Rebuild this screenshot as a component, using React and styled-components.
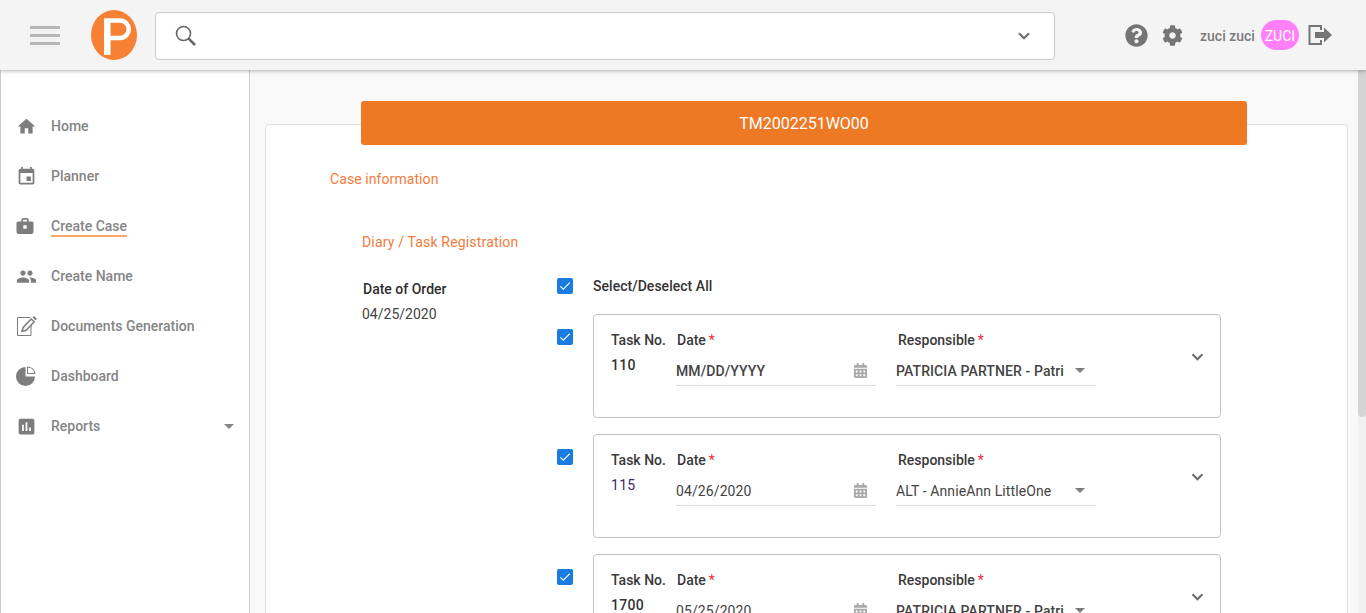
import React from "react";
import styled, { createGlobalStyle } from "styled-components";
import { MdHome, MdEvent, MdPeople, MdAssessment, MdArrowDropDown, MdCheck } from "react-icons/md";
import { FaQuestionCircle, FaCog, FaCalendarAlt } from "react-icons/fa";

const Global = createGlobalStyle`
  html, body { margin: 0; padding: 0; height: 100%; overflow: hidden; }
  body { font-family: Roboto, "Liberation Sans", sans-serif; font-size: 14px; color: #333; }
  * { box-sizing: border-box; }
`;

const Page = styled.div`
  height: 613px;
  width: 1366px;
  overflow: hidden;
  display: flex;
  flex-direction: column;
  background: #f9f9f9;
`;

const Header = styled.header`
  position: relative;
  z-index: 5;
  flex: 0 0 70px;
  display: flex;
  align-items: center;
  background: #f4f4f4;
  box-shadow: 0 1px 4px rgba(0, 0, 0, 0.3);
  padding-left: 30px;
`;

const Burger = styled.div`
  width: 30px;
  display: flex;
  flex-direction: column;
  gap: 5px;
  margin-right: 30px;
  & > span { display: block; height: 3px; background: #b6b6b6; }
`;

const LogoMark = styled.svg`
  width: 48px;
  height: 50px;
  margin-right: 17px;
  flex: none;
`;

const SearchBox = styled.div`
  width: 900px;
  height: 48px;
  margin-top: 2px;
  background: #fff;
  border: 1px solid #ccc;
  border-radius: 4px;
  display: flex;
  align-items: center;
  justify-content: space-between;
  padding: 0 24px 0 19px;
  color: #666;
`;

const HeaderTools = styled.div`
  display: flex;
  align-items: center;
  margin-left: 70px;
  color: #757575;
`;

const GearIcon = styled(FaCog)`
  margin-left: 14px;
`;

const UserName = styled.span`
  font-weight: 500;
  font-size: 14px;
  color: #7b7b7b;
  margin: 1px 6px 0 17px;
`;

const Avatar = styled.span`
  width: 38px;
  height: 30px;
  border-radius: 15px;
  background: #ff80f8;
  color: #fff;
  font-size: 14px;
  padding-top: 1px;
  display: flex;
  align-items: center;
  justify-content: center;
  margin-right: 9px;
`;

const Body = styled.div`
  flex: 1;
  min-height: 0;
  display: flex;
`;

const Sidebar = styled.nav`
  flex: 0 0 250px;
  background: #fff;
  border-left: 1px solid #ccc;
  border-right: 1px solid #ccc;
  padding: 31px 8px 0 15px;
  display: flex;
  flex-direction: column;
`;

const NavItem = styled.div`
  height: 50px;
  display: flex;
  align-items: center;
  color: #858585;
  font-weight: 500;
  font-size: 14px;
`;

const NavIcon = styled.span`
  width: 35px;
  flex: none;
  display: flex;
  align-items: center;
  color: #7d7d7d;
`;

const NavLabel = styled.span`
  flex: 1;
  display: flex;
`;

const Underlined = styled.span`
  border-bottom: ${(p) => (p.$active ? "2px solid #fba56b" : "none")};
  line-height: 18px;
  margin-top: ${(p) => (p.$active ? "2px" : "0")};
`;

const Main = styled.main`
  flex: 1;
  min-width: 0;
  position: relative;
  padding: 31px 18px 0 15px;
  overflow: hidden;
`;

const ScrollTrack = styled.div`
  position: absolute;
  top: 0;
  right: 0;
  bottom: 0;
  width: 8px;
  background: #f1f1f1;
`;

const ScrollThumb = styled.div`
  height: 347px;
  background: #d4d4d4;
  border-radius: 0 0 4px 4px;
`;

const TitleBar = styled.div`
  position: relative;
  z-index: 2;
  width: 886px;
  height: 44px;
  margin: 0 0 -21px 96px;
  background: #ed7925;
  border-radius: 3px;
  color: #fff;
  font-size: 16px;
  display: flex;
  align-items: center;
  justify-content: center;
`;

const Card = styled.section`
  width: 1083px;
  height: 600px;
  background: #fff;
  border: 1px solid #e2e2e2;
  border-radius: 4px;
  padding: 45px 0 0 64px;
`;

const SectionTitle = styled.div`
  color: #f37b3d;
  font-size: 14px;
  line-height: 18px;
  letter-spacing: 0.08px;
`;

const SubTitle = styled(SectionTitle)`
  margin: 45px 0 0 32px;
  letter-spacing: 0.17px;
`;

const FormGrid = styled.div`
  display: grid;
  grid-template-columns: 195px 36px 628px;
  margin: 27px 0 0 32px;
  row-gap: 16px;
  grid-auto-rows: min-content;
`;

const OrderBlock = styled.div`
  grid-row: 1 / span 4;
  padding-top: 2px;
  font-size: 14px;
  & > b { display: block; font-weight: 500; color: #2f2f2f; margin-left: 1px; line-height: 18px; }
  & > span { display: block; color: #444; margin-top: 7px; line-height: 18px; }
`;

const Box = styled.span`
  width: 16px;
  height: 16px;
  background: #1a7be0;
  border-radius: 2px;
  color: #fff;
  display: flex;
  align-items: center;
  justify-content: center;
  margin-top: ${(p) => p.$top || 0}px;
`;

const SelectAll = styled.div`
  font-weight: 500;
  color: #333;
  line-height: 18px;
  height: 21px;
  margin-top: -1px;
  letter-spacing: 0.03px;
`;

const TaskCard = styled.div`
  height: 104px;
  border: 1px solid #c4c4c4;
  border-radius: 4px;
  padding: 16px 0 0 17px;
  display: grid;
  grid-template-columns: 65px 220px 280px 1fr;
  position: relative;
`;

const Label = styled.div`
  font-weight: 500;
  color: #3a3a3a;
  line-height: 18px;
  margin-left: ${(p) => p.$shift || 0}px;
  & > i { color: #e9323f; font-style: normal; font-weight: 400; margin-left: 3px; }
`;

const TaskNo = styled.div`
  margin-top: 7px;
  line-height: 18px;
  letter-spacing: 0.3px;
  font-weight: ${(p) => (p.$plain ? 400 : 500)};
  color: ${(p) => (p.$plain ? "#3d2a6b" : "#333")};
`;

const FieldCol = styled.div`
  display: flex;
  flex-direction: column;
  margin-left: ${(p) => p.$shift || 0}px;
`;

const Field = styled.div`
  width: 200px;
  height: 30px;
  margin: 7px 0 0 -1px;
  border-bottom: 1px solid #ddd;
  display: flex;
  align-items: center;
  justify-content: space-between;
  color: #444;
  font-weight: ${(p) => (p.$bold ? 500 : 400)};
  padding-top: 1px;
  & > span { white-space: nowrap; letter-spacing: 0.1px; }
`;

const CalIcon = styled(FaCalendarAlt)`
  color: #a9a9a9;
  font-size: 15px;
  margin: -2px 8px 0 0;
`;

const Caret = styled(MdArrowDropDown)`
  color: #7d7d7d;
  font-size: 24px;
  margin: -3px 4px 0 0;
`;

const ChevronMark = styled.svg`
  width: ${(p) => p.$w}px;
  height: ${(p) => Math.round(p.$w * 0.65)}px;
  color: #6f6f6f;
  flex: none;
`;

const ExpandSlot = styled.div`
  justify-self: end;
  margin: 17px 16px 0 0;
`;

const Chevron = ({ w }) => (
  <ChevronMark $w={w} viewBox="0 0 12 8" fill="none" stroke="currentColor" strokeWidth="2.2">
    <path d="M1 1.200 L6 6.200 L11 1.200" />
  </ChevronMark>
);

const SearchIcon = () => (
  <svg width="22" height="22" viewBox="0 0 22 22" fill="none" stroke="#666">
    <circle cx="8.5" cy="8.5" r="7" strokeWidth="1.6" />
    <path d="M13.7 13.7 L20 20" strokeWidth="2.6" />
  </svg>
);

const Exit = () => (
  <svg width="24" height="22" viewBox="0 0 24 22" fill="#757575">
    <path d="M13 6V2H1.500v18H13v-4" fill="none" stroke="#757575" strokeWidth="2" />
    <path d="M7 8h9V3.500L24 11l-8 7.500V14H7z" />
  </svg>
);

const CaseIcon = () => (
  <svg width="18" height="18" viewBox="0 0 18 18" fill="#7d7d7d">
    <path d="M2 4.500h3.300V3a2 2 0 0 1 2-2h3.400a2 2 0 0 1 2 2v1.500H16a1.500 1.500 0 0 1 1.500 1.500v9a2 2 0 0 1-2 2h-13a2 2 0 0 1-2-2V6A1.500 1.500 0 0 1 2 4.500zM7 4.500h4V2.800H7zM7.300 8.300v3.400h3.400V8.300z" fillRule="evenodd" />
  </svg>
);

const DocIcon = () => (
  <svg width="22" height="22" viewBox="0 0 22 22" fill="none" stroke="#7d7d7d">
    <path d="M14.500 2.500H1.500v18h13.500V10" strokeWidth="1" />
    <path d="M6 16.500l1.200-4 8-8.500 3 2.800-8 8.500z" fill="none" strokeWidth="1.500" />
    <path d="M16.500 2.500l1.500-1.500 2.800 2.800-1.500 1.500z" fill="#7d7d7d" stroke="none" />
  </svg>
);

const PieIcon = () => (
  <svg width="20" height="20" viewBox="0 0 20 20">
    <path d="M9.500 1A9.500 9.500 0 1 0 19 10.500H9.500z" fill="#7d7d7d" />
    <path d="M11.500 1v6.500H19A8 8 0 0 0 11.500 1z" fill="#fff" stroke="#7d7d7d" strokeWidth="1" />
  </svg>
);

const navItems = [
  { label: "Home", icon: <MdHome size={21} /> },
  { label: "Planner", icon: <MdEvent size={21} /> },
  { label: "Create Case", icon: <CaseIcon />, active: true },
  { label: "Create Name", icon: <MdPeople size={21} /> },
  { label: "Documents Generation", icon: <DocIcon /> },
  { label: "Dashboard", icon: <PieIcon /> },
  { label: "Reports", icon: <MdAssessment size={21} />, caret: true },
];

const tasks = [
  { no: "110", date: "MM/DD/YYYY", who: "PATRICIA PARTNER - Patri", bold: true },
  { no: "115", date: "04/26/2020", who: "ALT - AnnieAnn LittleOne", bold: false },
  { no: "1700", date: "05/25/2020", who: "PATRICIA PARTNER - Patri", bold: true },
];

export default function App() {
  return (
    <Page>
      <Global />
      <Header>
        <Burger><span /><span /><span /></Burger>
        <LogoMark viewBox="0 0 48 50">
          <ellipse cx="24" cy="25" rx="23" ry="25" fill="#f68033" />
          <path d="M17.300 45V10.500" fill="none" stroke="#fff" strokeWidth="6.500" />
          <path d="M14 10.500H30A8.750 8.750 0 0 1 30 28H17" fill="none" stroke="#fff" strokeWidth="4.500" />
        </LogoMark>
        <SearchBox>
          <SearchIcon />
          <Chevron w={12} />
        </SearchBox>
        <HeaderTools>
          <FaQuestionCircle size={23} />
          <GearIcon size={21} />
          <UserName>zuci zuci</UserName>
          <Avatar>ZUCI</Avatar>
          <Exit />
        </HeaderTools>
      </Header>
      <Body>
        <Sidebar>
          {navItems.map((n) => (
            <NavItem key={n.label}>
              <NavIcon>{n.icon}</NavIcon>
              <NavLabel><Underlined $active={n.active}>{n.label}</Underlined></NavLabel>
              {n.caret && <MdArrowDropDown size={24} />}
            </NavItem>
          ))}
        </Sidebar>
        <Main>
          <ScrollTrack><ScrollThumb /></ScrollTrack>
          <TitleBar>TM2002251WO00</TitleBar>
          <Card>
            <SectionTitle>Case information</SectionTitle>
            <SubTitle>Diary / Task Registration</SubTitle>
            <FormGrid>
              <OrderBlock>
                <b>Date of Order</b>
                <span>04/25/2020</span>
              </OrderBlock>
              <Box><MdCheck size={14} /></Box>
              <SelectAll>Select/Deselect All</SelectAll>
              {tasks.map((t) => (
                <React.Fragment key={t.no}>
                  <Box $top={15}><MdCheck size={14} /></Box>
                  <TaskCard>
                    <FieldCol>
                      <Label>Task No.</Label>
                      <TaskNo $plain={!t.bold}>{t.no}</TaskNo>
                    </FieldCol>
                    <FieldCol $shift={1}>
                      <Label>Date<i>*</i></Label>
                      <Field $bold={t.bold && t.date.startsWith("MM")}><span>{t.date}</span><CalIcon /></Field>
                    </FieldCol>
                    <FieldCol $shift={1}>
                      <Label $shift={1}>Responsible<i>*</i></Label>
                      <Field $bold={t.bold}><span>{t.who}</span><Caret /></Field>
                    </FieldCol>
                    <ExpandSlot><Chevron w={13} /></ExpandSlot>
                  </TaskCard>
                </React.Fragment>
              ))}
            </FormGrid>
          </Card>
        </Main>
      </Body>
    </Page>
  );
}
